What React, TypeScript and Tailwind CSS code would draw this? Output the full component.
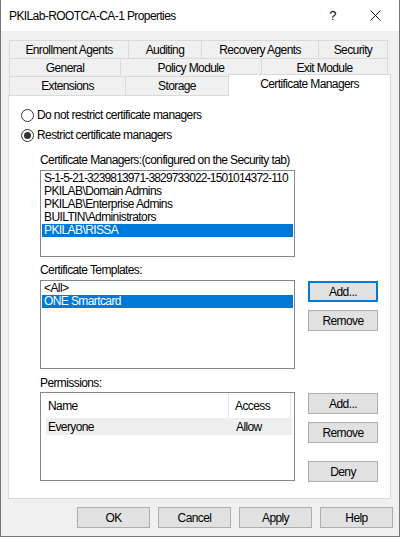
import React from 'react';

const font = "font-['Liberation_Sans',Arial,sans-serif] text-[12px] tracking-[-0.6px] text-black";

function Tab({ label, w, last }: { label: string; w: string; last?: boolean }) {
  return (
    <div
      className={`${w} h-full flex items-center justify-center border-t border-l border-[#d9d9d9] bg-[#f0f0f0] ${last ? 'border-r' : ''}`}
    >
      {label}
    </div>
  );
}

function Radio({ checked, label }: { checked?: boolean; label: string }) {
  return (
    <div className="h-[20px] flex items-center pl-[12px]">
      <span className="w-[13px] h-[13px] rounded-full border border-[#333] bg-white flex items-center justify-center">
        {checked && <span className="w-[7px] h-[7px] rounded-full bg-[#333]" />}
      </span>
      <span className="ml-[3px]">{label}</span>
    </div>
  );
}

function Btn({ label, focused, className = '' }: { label: string; focused?: boolean; className?: string }) {
  return (
    <div
      className={`h-[21px] flex items-center justify-center bg-[#e1e1e1] ${
        focused ? 'border-2 border-[#0078d7]' : 'border border-[#adadad]'
      } ${className}`}
    >
      {label}
    </div>
  );
}

function ListBox({ items, selected, h }: { items: string[]; selected: number; h: string }) {
  return (
    <div className={`w-[255px] ${h} border border-[#828790] bg-white p-px overflow-hidden`}>
      {items.map((it, i) => (
        <div
          key={it}
          className={`h-[13px] leading-[13px] pl-[2px] whitespace-nowrap ${
            i === selected ? 'bg-[#0078d7] text-white' : ''
          } ${it.startsWith('S-1-5') ? 'tracking-[-0.85px]' : ''}`}
        >
          {it}
        </div>
      ))}
    </div>
  );
}

export default function App() {
  return (
    <div className={`${font} w-[400px] h-[537px] flex flex-col bg-[#f0f0f0] border-x border-b border-[#777]`}>
      {/* title bar */}
      <div className="h-[31px] bg-white flex items-center pl-[8px] shrink-0">
        <span>PKILab-ROOTCA-CA-1 Properties</span>
        <span className="ml-auto mr-[34px] text-[13px]">?</span>
        <svg width="11" height="11" viewBox="0 0 11 11" className="mr-[18px]">
          <path d="M0.5 0.5 L10.5 10.5 M10.5 0.5 L0.5 10.5" stroke="#111" strokeWidth="1" />
        </svg>
      </div>

      <div className="pl-[7px] pr-[8px] pt-[9px]">
        {/* tabs */}
        <div className="pl-px">
          <div className="flex h-[18px]">
            <Tab label="Enrollment Agents" w="w-[119px]" />
            <Tab label="Auditing" w="w-[73px]" />
            <Tab label="Recovery Agents" w="w-[117px]" />
            <Tab label="Security" w="w-[70px]" last />
          </div>
          <div className="flex h-[18px]">
            <Tab label="General" w="w-[111px]" />
            <Tab label="Policy Module" w="w-[141px]" />
            <Tab label="Exit Module" w="w-[127px]" last />
          </div>
          <div className="flex h-[19px] items-end">
            <Tab label="Extensions" w="w-[116px]" />
            <Tab label="Storage" w="w-[103px]" />
            <div className="relative z-10 w-[163px] h-[22px] -mb-px pb-[3px] flex items-center justify-center bg-white border-t border-x border-[#d9d9d9]">
              Certificate Managers
            </div>
          </div>
        </div>

        {/* panel */}
        <div className="h-[404px] bg-white border border-[#d9d9d9] pt-[9px]">
          <Radio label="Do not restrict certificate managers" />
          <Radio checked label="Restrict certificate managers" />

          <div className="pl-[31px]">
            <div className="mt-[7px] h-[16px] leading-[16px]">Certificate Managers:(configured on the Security tab)</div>
            <div className="mt-[2px]">
              <ListBox
                h="h-[87px]"
                selected={4}
                items={[
                  'S-1-5-21-3239813971-3829733022-1501014372-110',
                  'PKILAB\\Domain Admins',
                  'PKILAB\\Enterprise Admins',
                  'BUILTIN\\Administrators',
                  'PKILAB\\RISSA',
                ]}
              />
            </div>

            <div className="mt-[5px] h-[16px] leading-[16px]">Certificate Templates:</div>
            <div className="mt-[2px] flex gap-[13px]">
              <ListBox h="h-[89px]" selected={1} items={['<All>', 'ONE Smartcard']} />
              <div className="w-[70px] flex flex-col gap-[8px] pt-px">
                <Btn label="Add..." focused />
                <Btn label="Remove" />
              </div>
            </div>

            <div className="mt-[6px] h-[16px] leading-[16px]">Permissions:</div>
            <div className="mt-px flex gap-[13px]">
              <div className="w-[255px] h-[89px] border border-[#828790] bg-white pl-[5px] pr-[3px]">
                <div className="flex h-[25px]">
                  <div className="w-[183px] flex items-center pl-[2px] border-r border-[#e5e5e5]">Name</div>
                  <div className="w-[62px] flex items-center pl-[6px] border-r border-[#e5e5e5]">Access</div>
                </div>
                <div className="flex h-[17px] items-center bg-[#eeeeee] w-[246px]">
                  <div className="w-[183px] pl-[2px]">Everyone</div>
                  <div className="pl-[7px]">Allow</div>
                </div>
              </div>
              <div className="w-[70px] flex flex-col pt-px">
                <Btn label="Add..." />
                <Btn label="Remove" className="mt-[8px]" />
                <Btn label="Deny" className="mt-[18px]" />
              </div>
            </div>
          </div>
        </div>
      </div>

      {/* bottom buttons */}
      <div className="mt-[8px] flex justify-end gap-[8px] pr-[6px]">
        <Btn label="OK" className="w-[73px]" />
        <Btn label="Cancel" className="w-[73px]" />
        <Btn label="Apply" className="w-[73px]" />
        <Btn label="Help" className="w-[73px]" />
      </div>
    </div>
  );
}
